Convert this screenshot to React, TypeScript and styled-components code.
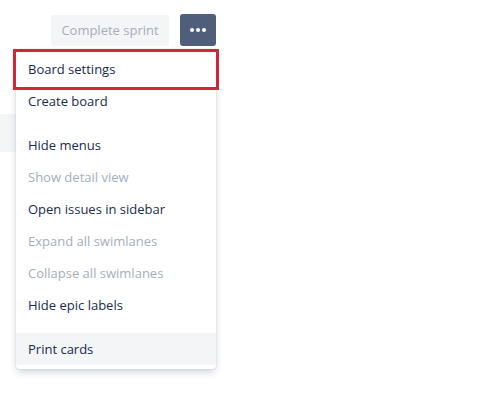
import React from "react";
import styled, { createGlobalStyle } from "styled-components";

const GlobalStyle = createGlobalStyle`
  html, body { margin: 0; padding: 0; background: #ffffff; }
  body { font-family: "Open Sans", "Noto Sans", sans-serif; color: #172b4d; }
  * { box-sizing: border-box; }
`;

const Page = styled.div`
  position: relative;
  width: 490px;
  height: 394px;
  overflow: hidden;
  background: #ffffff;
`;

const Toolbar = styled.div`
  display: flex;
  align-items: center;
  gap: 11px;
  padding: 11px 0 0 51px;
  height: 49px;
`;

const GhostButton = styled.button`
  height: 31px;
  width: 118px;
  border: none;
  border-radius: 3px;
  background: #f4f5f7;
  color: #a5adba;
  font-family: inherit;
  font-size: 13px;
  padding: 0 10px;
`;

const MoreButton = styled.button`
  width: 36px;
  height: 32px;
  border: none;
  border-radius: 3px;
  background: #505f79;
  display: flex;
  align-items: center;
  justify-content: center;
  gap: 2px;
  padding: 0;
`;

const Dot = styled.span`
  width: 4px;
  height: 4px;
  border-radius: 50%;
  background: #ffffff;
`;

const Board = styled.div`
  padding-top: 65px;
`;

const LaneBar = styled.div`
  height: 38px;
  width: 120px;
  background: #f4f5f7;
`;

const Menu = styled.div`
  position: absolute;
  top: 49px;
  left: 16px;
  width: 200px;
  padding: 4px 0;
  background: #ffffff;
  border-radius: 3px;
  box-shadow: 0 4px 8px -2px rgba(9, 30, 66, 0.25), 0 0 1px rgba(9, 30, 66, 0.31);
  display: flex;
  flex-direction: column;
  gap: 12px;
`;

const Group = styled.div`
  display: flex;
  flex-direction: column;
`;

const Item = styled.div<{ $disabled?: boolean; $active?: boolean }>`
  position: relative;
  height: 32px;
  padding: 0 12px;
  display: flex;
  align-items: center;
  font-size: 13px;
  line-height: 20px;
  color: ${(p) => (p.$disabled ? "#a5adba" : "#172b4d")};
  background: ${(p) => (p.$active ? "#f4f5f7" : "transparent")};
`;

const Highlight = styled.span`
  position: absolute;
  top: -4px;
  left: -3px;
  right: -3px;
  bottom: -5px;
  border: 3px solid #d1263a;
  pointer-events: none;
`;

type Entry = { label: string; disabled?: boolean; active?: boolean; marked?: boolean };

const groups: Entry[][] = [
  [{ label: "Board settings", marked: true }, { label: "Create board" }],
  [
    { label: "Hide menus" },
    { label: "Show detail view", disabled: true },
    { label: "Open issues in sidebar" },
    { label: "Expand all swimlanes", disabled: true },
    { label: "Collapse all swimlanes", disabled: true },
    { label: "Hide epic labels" },
  ],
  [{ label: "Print cards", active: true }],
];

export default function App() {
  return (
    <Page>
      <GlobalStyle />
      <Toolbar>
        <GhostButton disabled>Complete sprint</GhostButton>
        <MoreButton aria-label="More">
          <Dot />
          <Dot />
          <Dot />
        </MoreButton>
      </Toolbar>
      <Board>
        <LaneBar />
      </Board>
      <Menu>
        {groups.map((g, gi) => (
          <Group key={gi}>
            {g.map((e) => (
              <Item key={e.label} $disabled={e.disabled} $active={e.active}>
                {e.label}
                {e.marked && <Highlight />}
              </Item>
            ))}
          </Group>
        ))}
      </Menu>
    </Page>
  );
}
